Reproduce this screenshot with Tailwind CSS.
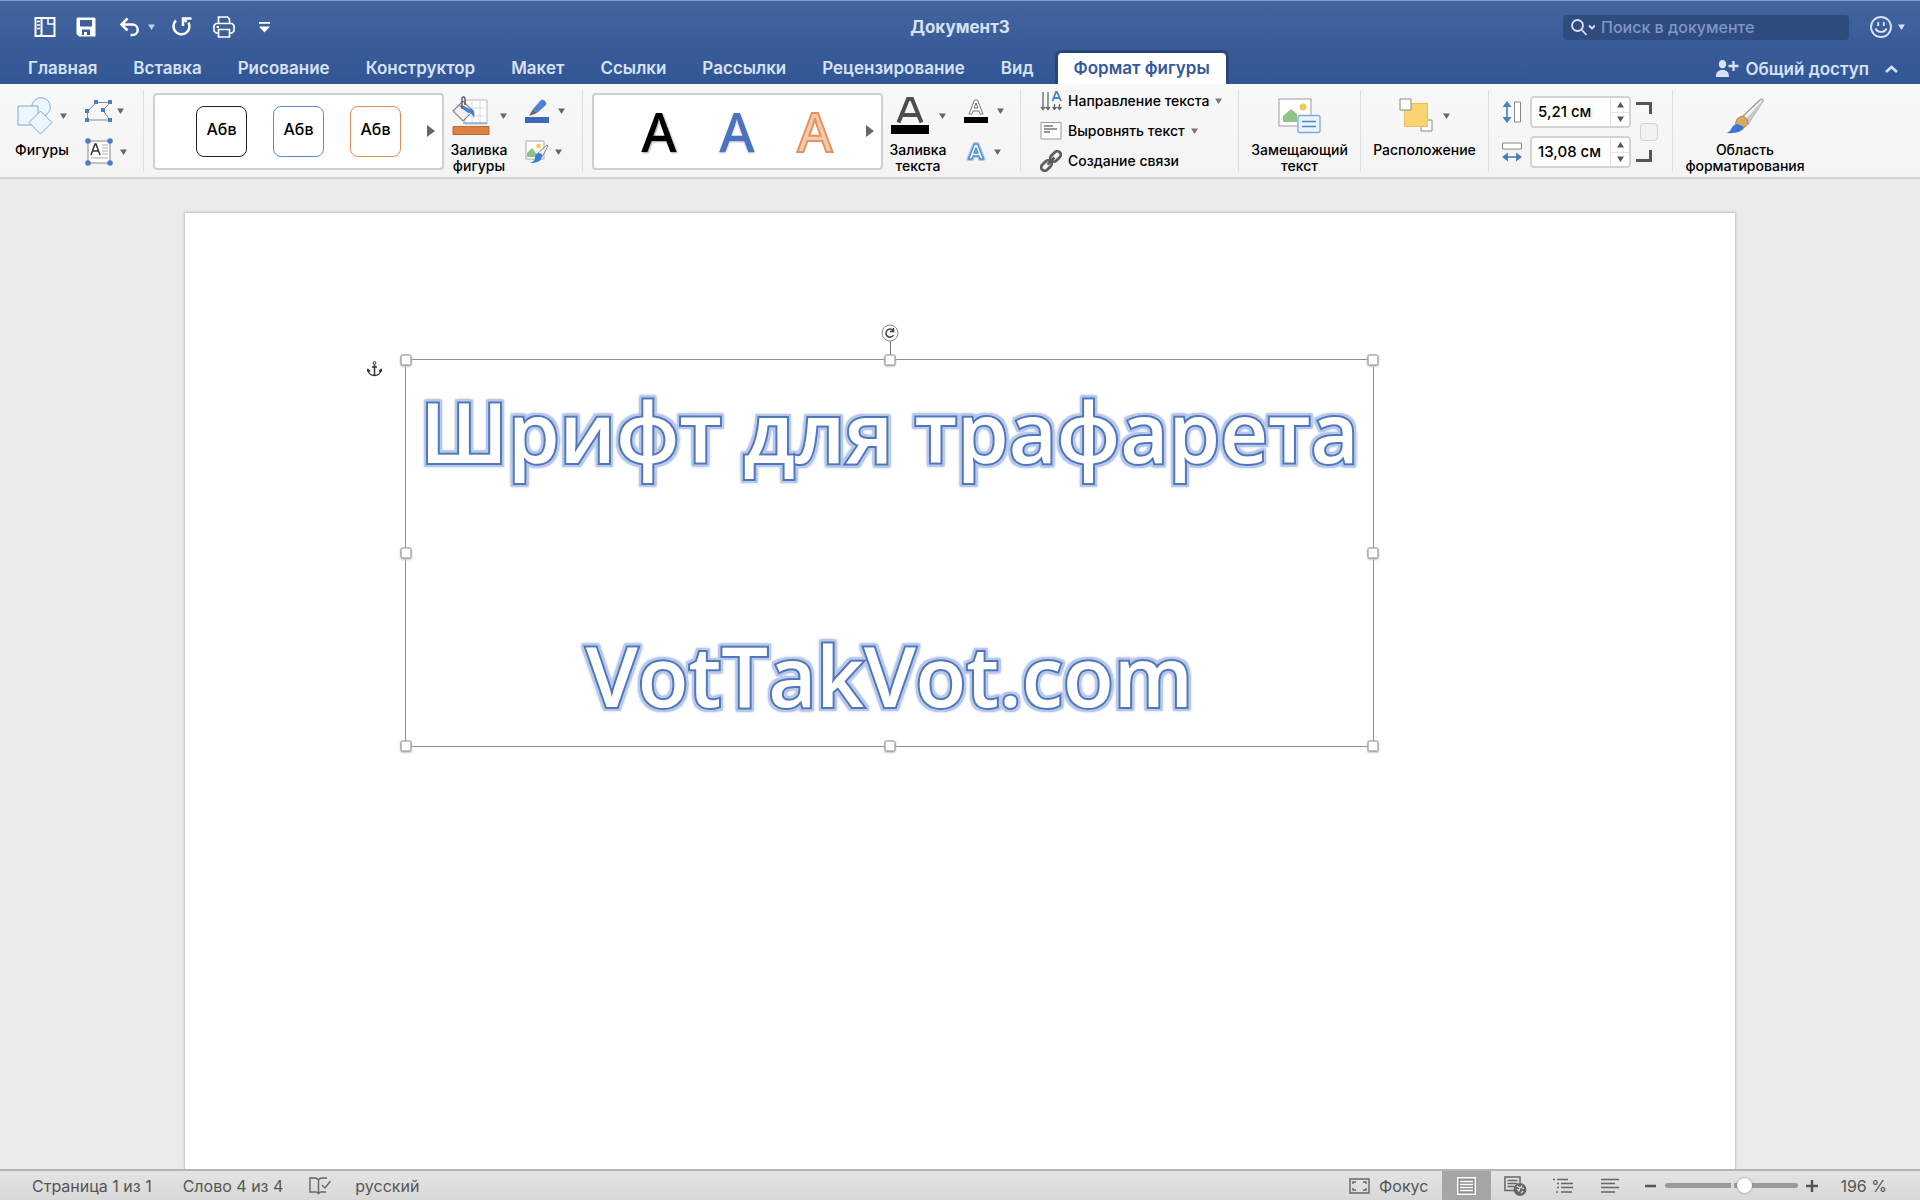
<!DOCTYPE html>
<html lang="ru">
<head>
<meta charset="utf-8">
<title>Документ3</title>
<script src="https://cdn.jsdelivr.net/npm/@tailwindcss/browser@4"></script>
</head>
<body class="flex h-screen flex-col overflow-hidden bg-[#ebebeb] font-['Inter','Noto_Sans',sans-serif] text-black">
<svg class="hidden">
  <symbol id="down" viewBox="0 0 8 7"><path d="M0 0.5h8L4 7z" fill="currentColor"/></symbol>
  <symbol id="next" viewBox="0 0 8 12"><path d="M0 0l8 6-8 6z" fill="#666"/></symbol>
</svg>

<header class="border-t border-[#7c9bcb] bg-linear-to-b from-[#42659f] to-[#325594] text-[#d6e2f6]">
  <div class="grid h-[52px] grid-cols-[1fr_auto_1fr] items-center">
    <div class="flex items-center pl-[34px] text-white">
      <button aria-label="Панель" class="mr-5"><svg class="h-5 w-[22px]" viewBox="0 0 22 20" fill="none" stroke="currentColor" stroke-width="2"><path d="M1.500 1h19v18h-19zM7.500 1v18"/><path d="M14 1v6h6" stroke-width="1.500"/><path d="M3 4.500h3M3 8h3M3 11.500h3" stroke-width="1.300"/></svg></button>
      <button aria-label="Сохранить" class="mr-[23px]"><svg class="size-5" viewBox="0 0 20 20"><path fill="currentColor" fill-rule="evenodd" d="M1.500.500h17l1 1v18H3l-2.500-2.500V1.500zM4 3v6.500h12V3zM6 12.500V18h2v-3h3v3h3v-5.500z"/></svg></button>
      <button aria-label="Отменить" class="mr-2"><svg class="h-5 w-[21px]" viewBox="0 0 21 20" fill="none" stroke="currentColor" stroke-width="2.500"><path d="M8.500 1.500L2.500 7.500l6 6M2.500 7.500h11a5.200 5.200 0 0 1 0 10.500h-2"/></svg></button>
      <button aria-label="Список отмены" class="mr-4 text-[#c3d2ec]"><svg class="h-[6px] w-[7px]"><use href="#down"/></svg></button>
      <button aria-label="Повторить" class="mr-5"><svg class="size-[22px]" viewBox="0 0 22 22" fill="none" stroke="currentColor" stroke-width="2.500"><path d="M5 4.500a8 8 0 1 0 12.500 2M12 10V2.500h8.500M12.500 2.500l3 3.500"/></svg></button>
      <button aria-label="Печать" class="mr-6"><svg class="size-[22px]" viewBox="0 0 22 22" fill="none" stroke="currentColor" stroke-width="1.700"><path d="M5.500 7.500V1h9l2 2v4.500M5.500 17H3l-2-2V9.500l2-2h16l2 2V15l-2 2h-2.500M5.500 13.500h11V21h-11z"/><path d="M3.500 11h2.500" stroke-width="2"/></svg></button>
      <button aria-label="Настроить панель"><svg class="h-[11px] w-[11px]" viewBox="0 0 11 11" fill="currentColor"><path d="M0 0h11v1.800H0zM0 4.500h11L5.500 10.500z"/></svg></button>
    </div>
    <h1 class="text-[17px] font-bold leading-5">Документ3</h1>
    <div class="flex items-center justify-end pr-[15px]">
      <div class="mr-[21px] flex h-[25px] w-[286px] items-center rounded bg-[#2f4c7e] pl-2">
        <svg class="mr-[6px] h-[17px] w-6" viewBox="0 0 24 17" fill="none" stroke="currentColor" stroke-width="1.800"><circle cx="6.500" cy="6.500" r="5.500"/><path d="M10.500 10.500l5 5.500M18 6.500l3 3 3-3"/></svg>
        <input aria-label="Поиск в документе" type="text" placeholder="Поиск в документе" class="w-0 flex-1 bg-transparent text-base leading-5 font-medium outline-none placeholder:text-[#7f98c6]">
      </div>
      <button aria-label="Отзыв" class="flex items-center gap-[6px]">
        <svg class="size-[22px]" viewBox="0 0 22 22" fill="none" stroke="currentColor" stroke-width="1.900"><circle cx="11" cy="11" r="10"/><path d="M8.200 6v4M13.800 6v4M5.500 12.500c2 4.500 9 4.500 11 0"/></svg>
        <svg class="h-[6px] w-[7px]"><use href="#down"/></svg>
      </button>
    </div>
  </div>
  <div class="flex h-[31px] items-end justify-between">
    <nav class="flex items-end gap-9 pl-7 text-[17px] font-semibold [&>a]:h-[31px] [&>a]:leading-[31px]">
      <a href="#">Главная</a><a href="#">Вставка</a><a href="#">Рисование</a><a href="#">Конструктор</a><a href="#">Макет</a><a href="#">Ссылки</a><a href="#">Рассылки</a><a href="#">Рецензирование</a><a href="#">Вид</a>
      <a href="#" aria-current="page" class="-ml-3 rounded-t-sm bg-white px-4 text-[#34599c] shadow-[0_0_0_3px_#28447a] [clip-path:inset(-3px_-3px_0_-3px)]">Формат фигуры</a>
    </nav>
    <div class="flex h-[31px] items-center gap-4 pr-[22px]">
      <button class="flex items-center gap-[6px] text-[17px] font-semibold leading-5"><svg class="h-[18px] w-[23px]" viewBox="0 0 23 18" fill="currentColor"><path d="M6.500 0C9 0 10.200 1.800 10.200 4S9 8.500 6.500 8.500 2.800 6.200 2.800 4 4 0 6.500 0zM0 17c0-5 2-7 6.500-7s6.500 2 6.500 7z"/><path d="M17.500 1v10M12.500 6h10" stroke="currentColor" stroke-width="2.300"/></svg>Общий доступ</button>
      <button aria-label="Свернуть ленту"><svg class="h-2 w-[13px]" viewBox="0 0 13 8" fill="none" stroke="currentColor" stroke-width="2.600"><path d="M1 7l5.500-5L12 7"/></svg></button>
    </div>
  </div>
</header>

<section aria-label="Лента" class="flex h-[95px] shrink-0 items-start border-b-2 border-[#d2d2d2] bg-linear-to-b from-[#f8f8f8] to-[#f4f4f4] pt-[6px] text-sm leading-4 font-medium [&>div]:h-[82px] [&>div]:shrink-0 [&>div]:border-[#dfdfdf]">
  <div class="flex w-36 border-r pl-[14px]">
    <button class="flex w-14 flex-col items-center">
      <span class="mb-px flex h-[51px] items-center gap-[6px] text-[#666]">
        <svg class="size-[37px]" viewBox="0 0 37 37" fill="#ecf6fd" stroke="#7da8d8"><circle cx="24" cy="10" r="9.300"/><path d="M1 9h20v19H1z"/><path d="M23.500 14l11.500 11.500L23.500 37 12 25.500z"/></svg>
        <svg class="h-[6px] w-[7px]"><use href="#down"/></svg></span>
      Фигуры
    </button>
    <div class="ml-[15px] flex flex-col text-[#666] [&>button]:flex [&>button]:flex-1 [&>button]:items-center">
      <button aria-label="Изменить фигуру" class="gap-1"><svg class="h-[22px] w-7" viewBox="0 0 28 22"><path d="M2.500 11.500L11 2.500h14l-7 8 7 9.500H2.500z" fill="none" stroke="#888"/><path fill="#4a7fc8" d="M9 0h4v4H9zM23 0h4v4h-4zM0 9h4v4H0zM16 8h4v4h-4zM0 18h4v4H0zM23 18h4v4h-4z"/></svg><svg class="h-[6px] w-[7px]"><use href="#down"/></svg></button>
      <button aria-label="Надпись" class="gap-[7px]"><svg class="h-7 w-7" viewBox="0 0 28 28"><path d="M3 3h22v22H3z" fill="#fff" stroke="#888"/><path d="M6 17l4-11h1l4 11M7.500 13h6" fill="none" stroke="#333" stroke-width="1.500"/><path d="M17 7h6M17 10h6M17 13h6M17 16h6M6 20h17" stroke="#aaa"/><g fill="#4a7fc8"><circle cx="3" cy="3" r="2.800"/><circle cx="25" cy="3" r="2.800"/><circle cx="3" cy="25" r="2.800"/><circle cx="25" cy="25" r="2.800"/></g></svg><svg class="h-[6px] w-[7px]"><use href="#down"/></svg></button>
    </div>
  </div>

  <div class="flex w-[439px] items-center border-r pl-[9px]">
    <div class="flex h-[77px] w-[291px] items-center gap-[26px] rounded border-2 border-[#cfcfcf] bg-white pl-[41px] text-base [&>button]:flex">
      <button class="size-[51px] items-center justify-center rounded-lg border-[1.5px] border-[#222] pb-1">Абв</button>
      <button class="size-[51px] items-center justify-center rounded-lg border-[1.5px] border-[#6488c4] pb-1">Абв</button>
      <button class="size-[51px] items-center justify-center rounded-lg border-[1.5px] border-[#e08e58] pb-1">Абв</button>
      <button aria-label="Другие стили"><svg class="h-3 w-2"><use href="#next"/></svg></button>
    </div>
    <button class="ml-[6px] flex h-full w-[58px] flex-col items-center">
      <span class="mb-px flex h-[51px] shrink-0 items-center gap-[10px] text-[#666]">
        <svg class="h-[39px] w-[38px]" viewBox="0 0 38 39"><path d="M13 4h22v24H13z" fill="#fff" stroke="#bbb"/><path d="M13 12h22M13 20h22M20 4v24M28 4v24" stroke="#d5d9de"/><path d="M11 27h24" stroke="#8aa9d3" stroke-width="1.500"/><path d="M1 15L11 5l10 10-10 10z" fill="#eef1f4" stroke="#888" stroke-width="1.200"/><path d="M7 10c5-2 8 3 12 3 4 1 4 5 3 9-2-4-3-6-6-5z" fill="#4a83cc"/><path d="M10 13V2.500a1.500 1.500 0 0 1 3 0V9" fill="none" stroke="#555" stroke-width="1.300"/><path d="M1 30.500h36v8H1z" fill="#de8142" stroke="#b96a33"/></svg>
        <svg class="h-[6px] w-[7px]"><use href="#down"/></svg></span>
      Заливка фигуры
    </button>
    <div class="ml-[17px] flex h-full flex-col text-[#666] [&>button]:flex [&>button]:flex-1 [&>button]:items-center">
      <button aria-label="Контур фигуры" class="gap-[9px]"><svg class="size-6" viewBox="0 0 24 24"><path d="M8 10l8-9q2-1 4 1t1 4l-9 8z" fill="#4c84d4"/><path d="M8 10l4 4-8 3z" fill="#666"/><path d="M0 18h24v6H0z" fill="#4069b5"/></svg><svg class="h-[6px] w-[7px]"><use href="#down"/></svg></button>
      <button aria-label="Эффекты фигуры" class="gap-[6px]"><svg class="size-6" viewBox="0 0 24 24"><path d="M1 1h18v18H1z" fill="#fff" stroke="#aaa"/><path d="M2 17v-4l5-5 7 9z" fill="#8cc283"/><circle cx="13.500" cy="6" r="2.300" fill="#f4c94f"/><path d="M13 13l9-8 1 1-6 11z" fill="#eee" stroke="#888"/><path d="M13 13q5 0 4 4-1 6-12 6 5-2 5-5 0-4 3-5z" fill="#3b7ed8"/></svg><svg class="h-[6px] w-[7px]"><use href="#down"/></svg></button>
    </div>
  </div>

  <div class="flex w-[438px] items-center border-r pl-[9px]">
    <div class="flex h-[77px] w-[291px] items-center rounded border-2 border-[#cfcfcf] bg-white pl-[46px] font-['Noto_Sans','Inter',sans-serif] text-[54px] leading-[70px] font-medium">
      <button class="w-[38px] text-center [text-shadow:1px_1px_2px_#999]">A</button>
      <button class="ml-10 w-[38px] text-center text-[#4b72bd] [text-shadow:0_1px_2px_#aac]">A</button>
      <button class="ml-10 w-[38px] text-center text-[#f7c9a8] [-webkit-text-stroke:2px_#e2935f]">A</button>
      <button aria-label="Другие стили WordArt" class="ml-8"><svg class="h-3 w-2"><use href="#next"/></svg></button>
    </div>
    <button class="ml-[6px] flex h-full w-[58px] flex-col items-center">
      <span class="mb-px flex h-[51px] shrink-0 items-center gap-[10px] text-[#666]">
        <svg class="h-[38px] w-[38px]" viewBox="0 0 38 38"><path d="M7.500 25.500L17 2h4l9.500 23.500M11 18h16" fill="none" stroke="#4d4d4d" stroke-width="4"/><path d="M0 28h38v9H0z"/></svg>
        <svg class="h-[6px] w-[7px]"><use href="#down"/></svg></span>
      Заливка текста
    </button>
    <div class="ml-[17px] flex h-full flex-col text-[#666] [&>button]:flex [&>button]:flex-1 [&>button]:items-center">
      <button aria-label="Контур текста" class="gap-[9px]"><svg class="size-6" viewBox="0 0 24 24"><path d="M5 15L10.500 1h3L19 15h-3l-1-3H9l-1 3zM10 9h4l-2-5z" fill="#fff" stroke="#777"/><path d="M0 18h24v6H0z" fill="#000"/></svg><svg class="h-[6px] w-[7px]"><use href="#down"/></svg></button>
      <button aria-label="Текстовые эффекты" class="gap-[6px]"><svg class="h-6 w-6" viewBox="0 0 24 24" stroke-linejoin="round"><path d="M4.500 19L10.500 4h3l6 15h-3.500l-1-3H9l-1 3zM10 13h4l-2-5z" fill="#fff" stroke="#a9cdf2" stroke-width="4"/><path d="M4.500 19L10.500 4h3l6 15h-3.500l-1-3H9l-1 3zM10 13h4l-2-5z" fill="#fff" stroke="#4f8dcb" stroke-width="1.500"/></svg><svg class="h-[6px] w-[7px]"><use href="#down"/></svg></button>
    </div>
  </div>

  <div class="flex w-[218px] flex-col justify-center border-r pl-[19px] [&>button]:flex [&>button]:h-[30px] [&>button]:shrink-0 [&>button]:items-center [&>button]:gap-[6px]">
    <button><svg class="h-5 w-[22px]" viewBox="0 0 22 20" fill="none" stroke="#666" stroke-width="1.300"><path d="M3 1v17M8 1v17M14.500 13v5M19.500 13v5M1 16l2 2.500L5 16M6 16l2 2.500 2-2.500M12.500 16l2 2.500 2-2.500M17.500 16l2 2.500 2-2.500"/><path d="M12.500 10L16 1h1l4 9M14 7h6" stroke="#4a84cc" stroke-width="1.800"/></svg>Направление текста<svg class="h-[6px] w-[7px] text-[#777]"><use href="#down"/></svg></button>
    <button><svg class="h-5 w-[22px]" viewBox="0 0 22 20" fill="none"><path d="M1 1.500h20v16.500H1z" fill="#fff" stroke="#999"/><path d="M4 5h9M4 8h13M4 11h6" stroke="#777" stroke-width="1.400"/></svg>Выровнять текст<svg class="h-[6px] w-[7px] text-[#777]"><use href="#down"/></svg></button>
    <button><svg class="h-[22px] w-[22px]" viewBox="0 0 22 22" fill="none" stroke="#5c5c5c" stroke-width="2.700"><rect x="9.500" y="3" width="12" height="7" rx="3.500" transform="rotate(-45 15.500 6.500)"/><rect x=".5" y="12" width="12" height="7" rx="3.500" transform="rotate(-45 6.500 15.500)"/><path d="M7.500 14.500l7-7"/></svg>Создание связи</button>
  </div>

  <div class="flex w-[122px] justify-center border-r">
    <button class="flex w-[104px] flex-col items-center">
      <span class="mb-px flex h-[51px] shrink-0 items-center">
        <svg class="h-[36px] w-[43px]" viewBox="0 0 43 36"><path d="M1 1h32v27H1z" fill="#fff" stroke="#999"/><path d="M5 24v-6l8-7 6 5v8z" fill="#8fc585"/><circle cx="25" cy="9" r="3.500" fill="#f2c94c"/><rect x="20" y="17.500" width="22" height="17" rx="2" fill="#eaf4fd" stroke="#7aa9de" stroke-width="1.300"/><path d="M24 23.500h14M24 28.500h14" stroke="#4f86c8" stroke-width="1.300"/></svg></span>
      Замещающий текст
    </button>
  </div>

  <div class="flex w-[128px] justify-center border-r">
    <button class="flex flex-col items-center">
      <span class="mb-px flex h-[51px] shrink-0 items-center gap-[9px] text-[#666]">
        <svg class="size-[35px]" viewBox="0 0 35 35"><path d="M22 22h11v11H22z" fill="#fff" stroke="#888"/><path d="M5.500 5.500h23v23h-23z" fill="#f9d371" stroke="#e9c056"/><path d="M1 1h11v11H1z" fill="#fff" stroke="#888"/></svg>
        <svg class="h-[6px] w-[7px]"><use href="#down"/></svg></span>
      Расположение
    </button>
  </div>

  <div class="flex w-[184px] items-center gap-[5px] border-r pt-[2px] pl-[13px]">
    <div class="flex flex-col gap-2 text-[15px]">
      <label class="flex items-center gap-2"><svg aria-label="Высота" class="h-[22px] w-5" viewBox="0 0 20 22"><path d="M5 3v16" stroke="#4a7fb8" stroke-width="1.600"/><path d="M5 0l4.500 6h-9zM5 22l4.500-6h-9z" fill="#4a7fb8"/><path d="M12.500 1h6v20h-6z" fill="#fff" stroke="#888"/></svg>
        <span class="flex h-8 w-[101px] rounded border-2 border-[#d3d3d3] bg-white"><input type="text" value="5,21 см" class="w-0 flex-1 pl-[6px] outline-none"><span class="flex w-[19px] flex-col border-l border-[#e4e4e4] text-[#555] [&>button]:flex [&>button]:flex-1 [&>button]:items-center [&>button]:justify-center"><button aria-label="Больше"><svg class="h-[6px] w-[7px] rotate-180"><use href="#down"/></svg></button><button aria-label="Меньше" class="border-t border-[#e4e4e4]"><svg class="h-[6px] w-[7px]"><use href="#down"/></svg></button></span></span></label>
      <label class="flex items-center gap-2"><svg aria-label="Ширина" class="h-[20px] w-5" viewBox="0 0 20 20"><path d="M3 15h14" stroke="#4a7fb8" stroke-width="1.600"/><path d="M0 15l6-4.500v9zM20 15l-6-4.500v9z" fill="#4a7fb8"/><path d="M.500 1h19v6H.500z" fill="#fff" stroke="#888"/></svg>
        <span class="flex h-8 w-[101px] rounded border-2 border-[#d3d3d3] bg-white"><input type="text" value="13,08 см" class="w-0 flex-1 pl-[6px] outline-none"><span class="flex w-[19px] flex-col border-l border-[#e4e4e4] text-[#555] [&>button]:flex [&>button]:flex-1 [&>button]:items-center [&>button]:justify-center"><button aria-label="Больше"><svg class="h-[6px] w-[7px] rotate-180"><use href="#down"/></svg></button><button aria-label="Меньше" class="border-t border-[#e4e4e4]"><svg class="h-[6px] w-[7px]"><use href="#down"/></svg></button></span></span></label>
    </div>
    <div class="flex flex-col gap-[9px]">
      <svg class="h-3 w-4" viewBox="0 0 16 12" fill="none" stroke="#555" stroke-width="3"><path d="M0 1.500h14.500V12"/></svg>
      <input type="checkbox" aria-label="Сохранить пропорции" class="ml-1 size-[18px] appearance-none rounded border border-[#d0d0d0] bg-[#f2f2f2]">
      <svg class="h-3 w-4" viewBox="0 0 16 12" fill="none" stroke="#555" stroke-width="3"><path d="M0 10.500h14.500V0"/></svg>
    </div>
  </div>

  <div class="flex pl-[11px]">
    <button class="flex w-[122px] flex-col items-center">
      <span class="mb-px flex h-[51px] shrink-0 items-center">
        <svg class="h-9 w-[38px]" viewBox="0 0 38 36"><path d="M15 20L34 2q3-2 3 1L22 26z" fill="#f3f3f3" stroke="#999" stroke-width="1.200"/><path d="M20 21L36 3l1 1-14 21z" fill="#c8c8c8"/><path d="M11 21q5-5 9-1 4 4-1 9-5 2-8-1-3-3 0-7z" fill="#dba866" stroke="#b98746"/><path d="M10 26q7 1 8 4-3 6-18 5 4-1 5-4 2-4 5-5z" fill="#3b76d6"/></svg></span>
      Область форматирования
    </button>
  </div>
</section>

<main class="flex min-h-0 flex-1 px-[184px] pt-[33px]">
  <article class="relative flex-1 border-x border-t border-[#cfcfcf] bg-white shadow-[0_0_3px_#ccc]">
    <svg class="absolute left-[182px] top-[148px] h-4 w-[15px]" viewBox="0 0 15 16" fill="none" stroke="#333" stroke-width="1.500"><circle cx="7.500" cy="2" r="1.400" stroke-width="1"/><path d="M7.500 3.500V15M1 8.500c0 8 13 8 13 0M0 10.500l1-2 2 2M12 10.500l2-2 1 2M5 6h5"/></svg>
    <div class="absolute left-[220px] top-[146px] h-[388px] w-[969px] border border-[#8e8e8e] font-['Open_Sans','Noto_Sans',sans-serif] text-[83px] leading-[100px] font-semibold text-white [&>i]:absolute [&>i]:size-[11px] [&>i]:-translate-1/2 [&>i]:rounded-[2px] [&>i]:border [&>i]:border-[#888] [&>i]:bg-white [&>i]:shadow-[0_1px_2px_#ccc]">
      <div class="flex flex-col items-center gap-36 whitespace-nowrap pt-[21px] [paint-order:stroke_fill] [stroke-linejoin:round] [-webkit-text-stroke:4px_#5077bb] [filter:drop-shadow(2px_0_0_#b7c8ea)_drop-shadow(-2px_0_0_#b7c8ea)_drop-shadow(0_2px_0_#b7c8ea)_drop-shadow(0_-2px_0_#b7c8ea)_drop-shadow(0_0_1px_#b7c8ea)]">
        <p>Шрифт для трафарета</p>
        <p>VotTakVot.com</p>
      </div>
      <span class="absolute left-1/2 -top-[19px] h-[18px] w-px bg-[#777]"></span>
      <svg class="absolute -top-9 left-1/2 size-[18px] -translate-x-1/2" viewBox="0 0 18 18" fill="#fff" stroke="#888"><circle cx="9" cy="9" r="8"/><path d="M12.500 11a4 4 0 1 1-.5-4.500M12.500 4v3.500H9" fill="none" stroke="#444" stroke-width="1.500"/></svg>
      <i class="left-0 top-0"></i><i class="left-1/2 top-0"></i><i class="left-full top-0"></i>
      <i class="left-0 top-1/2"></i><i class="left-full top-1/2"></i>
      <i class="left-0 top-full"></i><i class="left-1/2 top-full"></i><i class="left-full top-full"></i>
    </div>
  </article>
</main>

<footer class="relative flex h-[31px] shrink-0 items-center justify-between border-t-2 border-[#b5b5b5] bg-linear-to-b from-[#e4e4e4] to-[#d8d8d8] text-base leading-5 text-[#555]">
  <div class="flex items-center pl-8">
    <span class="mr-[31px]">Страница 1 из 1</span>
    <span class="mr-[26px]">Слово 4 из 4</span>
    <button aria-label="Правописание" class="mr-6"><svg class="h-[18px] w-[22px]" viewBox="0 0 22 18" fill="none" stroke="#666" stroke-width="1.400"><path d="M9.500 17V3Q8 1 6 1H1v14h6q2 0 2.500 2 .5-2 2.500-2h5M9.500 3q1-2 3.500-2h5M13 8l3 3 5.500-7"/></svg></button>
    <span>русский</span>
  </div>
  <div class="flex h-full items-center pr-[33px]">
    <button class="mr-[14px] flex items-center gap-[9px]"><svg class="h-4 w-[21px]" viewBox="0 0 21 16" fill="none" stroke="#666" stroke-width="1.400"><path d="M1 1h19v14H1zM4 6V4h3M14 4h3v2M17 10v2h-3M7 12H4v-2"/></svg>Фокус</button>
    <button aria-label="Разметка страницы" class="mr-[13px] flex h-full w-[49px] items-center justify-center bg-[#a5a5a5]"><svg class="h-[18px] w-[19px]" viewBox="0 0 19 18" fill="none" stroke="#fff"><path d="M.700.700h17.600v16.600H.700z" fill="#8d8d8d" stroke-width="1.400"/><path d="M3 4.500h13M3 7.500h13M3 10.500h13M3 13.500h13" stroke-width="1.400"/></svg></button>
    <button aria-label="Веб-документ" class="mr-[26px]"><svg class="h-5 w-[23px]" viewBox="0 0 23 20" fill="none" stroke="#666" stroke-width="1.500"><path d="M10 14.500H1V1h15v6M3.500 4.500h10M3.500 7.500h10M3.500 10.500h7"/><circle cx="16" cy="13.500" r="5.700" fill="#666"/><path d="M13 10l3 2-1 3-2-2M18 9.500l-1 2 3 1M17 17l2-2" stroke="#ddd" stroke-width="1.200"/></svg></button>
    <button aria-label="Структура" class="mr-7"><svg class="h-4 w-5" viewBox="0 0 20 16" fill="none" stroke="#666" stroke-width="1.500"><path d="M0 1.500h2M4 1.500h11M4 5.500h2M8 5.500h12M4 9.500h2M8 9.500h12M3 14h2M8 14h11"/></svg></button>
    <button aria-label="Черновик" class="mr-[26px]"><svg class="h-4 w-[18px]" viewBox="0 0 18 16" fill="none" stroke="#666" stroke-width="1.500"><path d="M0 1.500h18M0 5.500h14M0 9.500h18M0 14h14"/></svg></button>
    <button aria-label="Уменьшить"><svg class="h-3 w-3" viewBox="0 0 12 12"><path d="M0 6h11" stroke="#555" stroke-width="2.500"/></svg></button>
    <input type="range" min="0" max="100" value="61" aria-label="Масштаб" class="mx-2 h-4 w-[133px] appearance-none bg-transparent [&::-webkit-slider-runnable-track]:h-[5px] [&::-webkit-slider-runnable-track]:rounded-full [&::-webkit-slider-runnable-track]:bg-linear-[90deg,#9a9a9a_66px,#ddd_66px,#ddd_69px,#9a9a9a_69px] [&::-webkit-slider-thumb]:-mt-[5px] [&::-webkit-slider-thumb]:size-[15px] [&::-webkit-slider-thumb]:appearance-none [&::-webkit-slider-thumb]:rounded-full [&::-webkit-slider-thumb]:bg-white [&::-webkit-slider-thumb]:shadow-[0_0_2px_#777]">
    <button aria-label="Увеличить" class="mr-[22px]"><svg class="h-3 w-3" viewBox="0 0 12 12"><path d="M0 6h12M6 0v12" stroke="#555" stroke-width="2.500"/></svg></button>
    <span>196 %</span>
  </div>
</footer>
</body>
</html>
